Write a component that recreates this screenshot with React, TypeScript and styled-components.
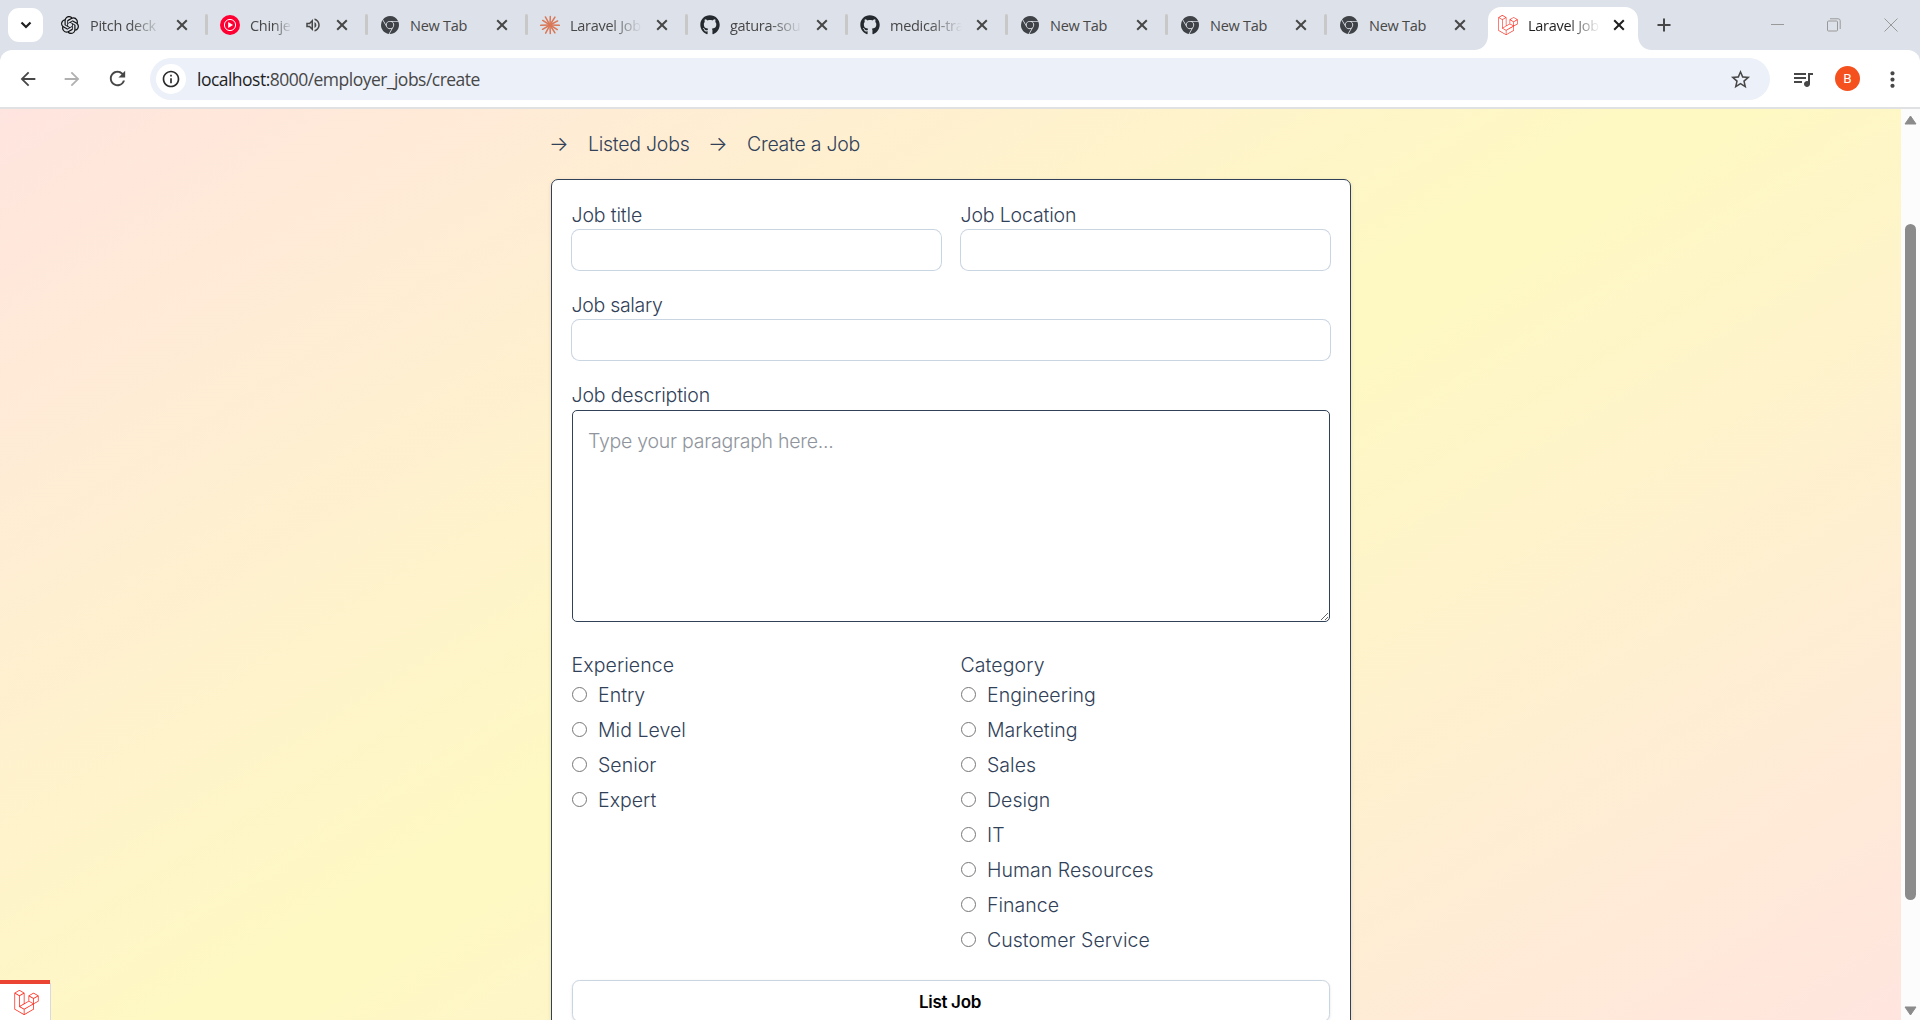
import React from 'react';
import styled, { createGlobalStyle, css } from 'styled-components';
import { SiOpenai, SiGooglechrome, SiLaravel } from 'react-icons/si';
import { FaGithub } from 'react-icons/fa';
import {
  MdArrowBack,
  MdArrowForward,
  MdRefresh,
  MdStarBorder,
  MdQueueMusic,
  MdOutlineVolumeUp,
  MdInfoOutline,
  MdMoreVert,
} from 'react-icons/md';

const GlobalStyle = createGlobalStyle`
  * { box-sizing: border-box; }
  body { margin: 0; overflow: hidden; }
`;

const Window = styled.div`
  width: 1920px;
  height: 1020px;
  display: flex;
  flex-direction: column;
  overflow: hidden;
  background: #dde1e9;
  font-family: 'Open Sans', 'Noto Sans', sans-serif;
`;

/* ---------- tab strip ---------- */

const TabStrip = styled.div`
  display: flex;
  height: 50px;
  flex: none;
`;

const SearchTabs = styled.button`
  width: 35px;
  height: 34px;
  margin: 8px 3px 0 8px;
  padding: 0;
  border: 0;
  border-radius: 11px;
  background: #fff;
  display: grid;
  place-items: center;
`;

const Tab = styled.div<{ $width: number; $active?: boolean; $divided?: boolean }>`
  position: relative;
  width: ${(p) => p.$width}px;
  height: 50px;
  flex: none;
  display: flex;
  align-items: center;
  padding: 0 18px 0 14px;
  color: ${(p) => (p.$active ? '#1f1f1f' : '#474747')};
  ${(p) =>
    p.$divided &&
    css`
      &::before {
        content: '';
        position: absolute;
        left: -1px;
        top: 14px;
        width: 3px;
        height: 21px;
        border-radius: 1.5px;
        background: #c8c8c8;
      }
    `}
`;

const ActiveShape = styled.svg`
  position: absolute;
  left: -10px;
  top: 7px;
`;

const Favicon = styled.span`
  position: relative;
  width: 20px;
  height: 20px;
  flex: none;
  display: grid;
  place-items: center;
`;

const TabTitle = styled.span<{ $width: number; $fade?: boolean }>`
  position: relative;
  width: ${(p) => p.$width}px;
  margin: 1px 0 0 10px;
  flex: none;
  white-space: nowrap;
  font-size: 14.5px;
  line-height: 22px;
  letter-spacing: -0.28px;
  ${(p) => p.$fade && css`mask-image: linear-gradient(90deg, #000 55%, transparent 100%);`}
`;

const AudioIcon = styled.span`
  display: grid;
  place-items: center;
  width: 18px;
  height: 18px;
  margin-left: 12px;
  color: #474747;
`;

const CloseIcon = styled.svg`
  position: relative;
  margin-left: auto;
  flex: none;
`;

const NewTabButton = styled.button`
  margin: 18px 0 0 14px;
  width: 14px;
  height: 14px;
  padding: 0;
  border: 0;
  background: none;
  display: grid;
  place-items: center;
`;

const WindowControls = styled.div`
  margin-left: auto;
  display: flex;
  gap: 43px;
  align-items: center;
  height: 49px;
  padding-right: 22px;
`;

/* ---------- toolbar ---------- */

const Toolbar = styled.div`
  height: 59px;
  flex: none;
  display: flex;
  align-items: center;
  padding: 0 16px 0 16px;
  background: #fff;
  border-bottom: 2px solid #dfe1e3;
  border-radius: 12px 12px 0 0;
  color: #474747;
`;

const ToolButton = styled.button<{ $width: number; $faded?: boolean }>`
  width: ${(p) => p.$width}px;
  height: 24px;
  flex: none;
  padding: 0;
  border: 0;
  background: none;
  color: ${(p) => (p.$faded ? '#b0b0b0' : '#474747')};
  display: grid;
  place-items: center;
`;

const Omnibox = styled.div`
  width: 1620px;
  height: 42px;
  margin: 1px 0 0 21px;
  flex: none;
  border-radius: 21px;
  background: #ecf0f9;
  display: flex;
  align-items: center;
  padding: 0 18px 0 6px;
`;

const SiteInfo = styled.span`
  width: 30px;
  height: 30px;
  border-radius: 50%;
  background: #fff;
  color: #2b2b2b;
  display: grid;
  place-items: center;
`;

const Address = styled.span`
  flex: 1;
  margin-left: 11px;
  font-size: 17.5px;
  line-height: 24px;
  letter-spacing: -0.52px;
  color: #474747;
  b {
    font-weight: 400;
    color: #1f1f1f;
  }
`;

const Avatar = styled.span`
  width: 25px;
  height: 25px;
  flex: none;
  border-radius: 50%;
  background: #f4511e;
  color: #fff;
  font: 13.5px/25px Roboto, sans-serif;
  text-align: center;
`;

/* ---------- page ---------- */

const Viewport = styled.div`
  position: relative;
  flex: 1;
  min-height: 0;
  display: flex;
`;

const Page = styled.main`
  flex: 1;
  overflow: hidden;
  padding: 20px 0 0 551px;
  background: linear-gradient(to bottom right in oklab, #ffe2e2, #fef9c2, #ffe2e2) 0 -126px / 1901px 1178px no-repeat;
  font-family: Inter, sans-serif;
  font-size: 19.5px;
  font-weight: 350;
  line-height: 30px;
  letter-spacing: -0.2px;
  color: #314158;
`;

const Breadcrumbs = styled.nav`
  display: flex;
  height: 30px;
  margin-bottom: 20px;
`;

const Arrow = styled.span<{ $indent?: boolean }>`
  width: 37px;
  flex: none;
  margin-left: ${(p) => (p.$indent ? 21 : 0)}px;
  text-indent: -2px;
  font-size: 20.5px;
  letter-spacing: 0;
`;

const Crumb = styled.a<{ $width?: number }>`
  width: ${(p) => (p.$width ? `${p.$width}px` : 'auto')};
  letter-spacing: -0.25px;
  white-space: nowrap;
`;

const Card = styled.form`
  width: 800px;
  height: 960px;
  padding: 20px;
  border: 1px solid #314158;
  border-radius: 7px;
  background: #fff;
  box-shadow: 0 1px 4px rgba(0, 0, 0, 0.1);
  display: flex;
  flex-direction: column;
`;

const Columns = styled.div`
  display: grid;
  grid-template-columns: 1fr 1fr;
  gap: 20px;
`;

const Field = styled.label<{ $gap: number }>`
  display: flex;
  flex-direction: column;
  margin-bottom: ${(p) => p.$gap}px;
`;

const FieldName = styled.span<{ $tracking?: number }>`
  height: 30px;
  text-indent: -0.5px;
  letter-spacing: ${(p) => p.$tracking ?? -0.15}px;
`;

const TextInput = styled.input`
  height: 40px;
  border: 0;
  border-radius: 7.5px;
  outline: none;
  padding: 0 12px;
  background: #fff;
  font: inherit;
  box-shadow: 0 0 0 1px #cad5e2;
`;

const Description = styled.textarea`
  appearance: none;
  height: 212px;
  padding: 15px;
  border: 1px solid #314158;
  border-radius: 5px;
  outline: none;
  background: #fff;
  font: inherit;
  letter-spacing: -0.25px;
  color: inherit;
  resize: both;
  &::placeholder {
    color: #90959d;
  }
`;

const Group = styled.fieldset`
  margin: 0;
  padding: 0;
  border: 0;
  min-width: 0;
  height: 330px;
`;

const Option = styled.label`
  display: flex;
  align-items: center;
  gap: 11px;
  height: 30px;
  margin-bottom: 5px;
  letter-spacing: 0.03px;
`;

const Radio = styled.input`
  width: 15px;
  height: 15px;
  margin: 0 0 1px;
`;

const Submit = styled.button`
  height: 42px;
  flex: none;
  padding: 2px 2px 0 0;
  border: 1px solid #cad5e2;
  border-radius: 7.5px;
  background: #fff;
  box-shadow: 0 1px 3px rgba(0, 0, 0, 0.1);
  font: 600 17px/25px Inter, sans-serif;
  letter-spacing: -0.3px;
  color: #000;
`;

const Scrollbar = styled.div`
  width: 19px;
  flex: none;
  background: #fcfcfc;
  display: flex;
  flex-direction: column;
  align-items: center;
  padding: 6px 0 4px;
`;

const Thumb = styled.div`
  width: 11px;
  height: 676px;
  margin: 99px 0 auto;
  border-radius: 6px;
  background: #8b8b8b;
`;

const DebugBadge = styled.div`
  position: absolute;
  left: 0;
  bottom: 0;
  width: 51px;
  height: 40px;
  background: linear-gradient(#eb4432, #eb4432) 0 0 / 50px 4px no-repeat, linear-gradient(#fff, #fff) 0 4px / 50px 36px no-repeat,
    linear-gradient(#d8d8e0, #d8d8e0) 50px 3px / 1px 37px no-repeat;
  color: #ff2d20;
  padding: 10px 0 0 14px;
  line-height: 0;
`;

const ChromeMark = () => <SiGooglechrome size={18} color="#3f4347" />;

const MusicMark = () => (
  <svg width="20" height="20" viewBox="0 0 20 20">
    <circle cx="10" cy="10" r="10" fill="#ff0033" />
    <circle cx="10" cy="10" r="5.6" fill="none" stroke="#fff" strokeWidth="1" />
    <path d="M8.2 7.1 13 10l-4.8 2.9z" fill="#fff" />
  </svg>
);

const BurstMark = () => (
  <svg width="20" height="20" viewBox="-10 -10 20 20" stroke="#d97757" strokeWidth="1.5" strokeLinecap="round">
    {[2, 32, 58, 88, 118, 150, 178, 212, 240, 272, 302, 332].map((deg, i) => (
      <line key={deg} x1="0" y1="0" x2={i % 2 ? 8.6 : 9.3} y2="0" transform={`rotate(${deg})`} />
    ))}
  </svg>
);

const Close = ({ color = '#474747' }: { color?: string }) => (
  <CloseIcon width="12" height="12" viewBox="0 0 12 12" stroke={color} strokeWidth="2">
    <path d="M1.2 1.2 10.8 10.8M10.8 1.2 1.2 10.8" />
  </CloseIcon>
);

const tabs: { title: string; icon: React.ReactNode; width: number; fade?: boolean; audio?: boolean }[] = [
  { title: 'Pitch deck', icon: <SiOpenai size={18} color="#111" />, width: 160, fade: true },
  { title: 'Chinje', icon: <MusicMark />, width: 160, fade: true, audio: true },
  { title: 'New Tab', icon: <ChromeMark />, width: 160 },
  { title: 'Laravel Job', icon: <BurstMark />, width: 160, fade: true },
  { title: 'gatura-sou', icon: <FaGithub size={20} color="#24292f" />, width: 160, fade: true },
  { title: 'medical-tra', icon: <FaGithub size={20} color="#24292f" />, width: 160, fade: true },
  { title: 'New Tab', icon: <ChromeMark />, width: 160 },
  { title: 'New Tab', icon: <ChromeMark />, width: 159 },
  { title: 'New Tab', icon: <ChromeMark />, width: 159 },
];

const experience = ['Entry', 'Mid Level', 'Senior', 'Expert'];
const categories = ['Engineering', 'Marketing', 'Sales', 'Design', 'IT', 'Human Resources', 'Finance', 'Customer Service'];

const RadioGroup = ({ label, name, options }: { label: string; name: string; options: string[] }) => (
  <Group>
    <FieldName as="div" $tracking={0.1}>
      {label}
    </FieldName>
    {options.map((option) => (
      <Option key={option}>
        <Radio type="radio" name={name} />
        {option}
      </Option>
    ))}
  </Group>
);

export default function App() {
  return (
    <Window>
      <GlobalStyle />
      <TabStrip>
        <SearchTabs>
          <svg width="12" height="8" viewBox="0 0 12 8" fill="none" stroke="#1f1f1f" strokeWidth="2.2">
            <path d="M1.5 1.5 6 6l4.500-4.500" />
          </svg>
        </SearchTabs>
        {tabs.map((tab, i) => (
          <Tab key={i} $width={tab.width} $divided={i > 0}>
            <Favicon>{tab.icon}</Favicon>
            <TabTitle $width={tab.audio ? 42 : 72} $fade={tab.fade}>
              {tab.title}
            </TabTitle>
            {tab.audio && (
              <AudioIcon>
                <MdOutlineVolumeUp size={18} />
              </AudioIcon>
            )}
            <Close />
          </Tab>
        ))}
        <Tab $width={159} $active>
          <ActiveShape width="180" height="43" viewBox="0 0 180 43">
            <path d="M0 43C8 43 14 37 14 28V13A13 13 0 0 1 27 0H151A13 13 0 0 1 164 13V28C164 37 170 43 178 43Z" fill="#fff" />
          </ActiveShape>
          <Favicon>
            <SiLaravel size={20} color="#ff2d20" />
          </Favicon>
          <TabTitle $width={72} $fade>
            Laravel Job
          </TabTitle>
          <Close color="#1f1f1f" />
        </Tab>
        <NewTabButton>
          <svg width="14" height="14" viewBox="0 0 14 14" stroke="#474747" strokeWidth="2">
            <path d="M7 .5v13M.5 7h13" />
          </svg>
        </NewTabButton>
        <WindowControls>
          <svg width="13" height="14" viewBox="0 0 13 14" stroke="#999">
            <path d="M0 6.500h13" />
          </svg>
          <svg width="14" height="14" viewBox="0 0 14 14" fill="none" stroke="#999">
            <rect x=".5" y="3" width="10" height="10" rx="1" />
            <path d="M3 .8h8.200a2 2 0 0 1 2 2V11" />
          </svg>
          <svg width="14" height="14" viewBox="0 0 14 14" stroke="#999">
            <path d="M.5.5l13 13M13.500.5l-13 13" />
          </svg>
        </WindowControls>
      </TabStrip>

      <Toolbar>
        <ToolButton $width={23}>
          <MdArrowBack size={22} />
        </ToolButton>
        <ToolButton $width={66} $faded>
          <MdArrowForward size={22} />
        </ToolButton>
        <ToolButton $width={24}>
          <MdRefresh size={23} />
        </ToolButton>
        <Omnibox>
          <SiteInfo>
            <MdInfoOutline size={20} />
          </SiteInfo>
          <Address>
            <b>localhost:</b>8000/employer_jobs/create
          </Address>
          <MdStarBorder size={23} />
        </Omnibox>
        <ToolButton $width={65}>
          <MdQueueMusic size={24} />
        </ToolButton>
        <Avatar>B</Avatar>
        <ToolButton $width={64}>
          <MdMoreVert size={25} />
        </ToolButton>
      </Toolbar>

      <Viewport>
        <Page>
          <Breadcrumbs>
            <Arrow>→</Arrow>
            <Crumb $width={101}>Listed Jobs</Crumb>
            <Arrow $indent>→</Arrow>
            <Crumb>Create a Job</Crumb>
          </Breadcrumbs>
          <Card>
            <Columns>
              <Field $gap={20}>
                <FieldName>Job title</FieldName>
                <TextInput />
              </Field>
              <Field $gap={20}>
                <FieldName>Job Location</FieldName>
                <TextInput />
              </Field>
            </Columns>
            <Field $gap={20}>
              <FieldName $tracking={-0.3}>Job salary</FieldName>
              <TextInput />
            </Field>
            <Field $gap={28}>
              <FieldName>Job description</FieldName>
              <Description placeholder="Type your paragraph here..." />
            </Field>
            <Columns>
              <RadioGroup label="Experience" name="experience" options={experience} />
              <RadioGroup label="Category" name="category" options={categories} />
            </Columns>
            <Submit type="button">List Job</Submit>
          </Card>
        </Page>
        <Scrollbar>
          <svg width="13" height="10" viewBox="0 0 13 10" fill="#8b8b8b" stroke="#8b8b8b" strokeLinejoin="round">
            <path d="M6.500 1 12 9H1z" />
          </svg>
          <Thumb />
          <svg width="13" height="10" viewBox="0 0 13 10" fill="#8b8b8b" stroke="#8b8b8b" strokeLinejoin="round">
            <path d="M6.500 9 12 1H1z" />
          </svg>
        </Scrollbar>
        <DebugBadge>
          <SiLaravel size={25} />
        </DebugBadge>
      </Viewport>
    </Window>
  );
}
